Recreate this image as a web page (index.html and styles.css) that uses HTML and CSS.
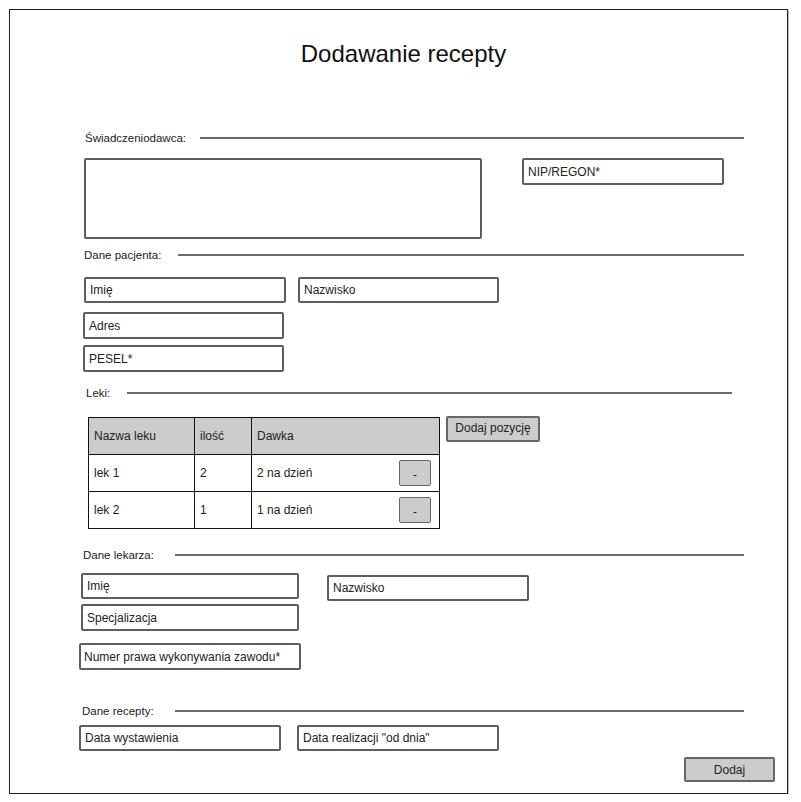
FILE: index.html
```html
<!DOCTYPE html>
<html lang="pl">
<head>
<meta charset="utf-8">
<title>Dodawanie recepty</title>
<link rel="stylesheet" href="styles.css">
</head>
<body>
<div class="frame">
  <h1 class="title">Dodawanie recepty</h1>

  <div class="section-head sh1"><span class="label">Świadczeniodawca:</span><i class="rule"></i></div>
  <div class="row r1">
    <div class="field textarea"></div>
    <div class="field nip">NIP/REGON*</div>
  </div>

  <div class="section-head sh2"><span class="label">Dane pacjenta:</span><i class="rule"></i></div>
  <div class="row r2">
    <div class="field p-imie">Imię</div>
    <div class="field p-nazwisko">Nazwisko</div>
  </div>
  <div class="field p-adres">Adres</div>
  <div class="field p-pesel">PESEL*</div>

  <div class="section-head sh3"><span class="label">Leki:</span><i class="rule"></i></div>
  <div class="row r3">
    <table class="meds">
      <thead>
        <tr><th class="c1">Nazwa leku</th><th class="c2">ilość</th><th class="c3">Dawka</th></tr>
      </thead>
      <tbody>
        <tr><td>lek 1</td><td>2</td><td><div class="dose"><span>2 na dzień</span><span class="minus">-</span></div></td></tr>
        <tr><td>lek 2</td><td>1</td><td><div class="dose"><span>1 na dzień</span><span class="minus">-</span></div></td></tr>
      </tbody>
    </table>
    <div class="btn add-pos">Dodaj pozycję</div>
  </div>

  <div class="section-head sh4"><span class="label">Dane lekarza:</span><i class="rule"></i></div>
  <div class="row r4">
    <div class="field l-imie">Imię</div>
    <div class="field l-nazwisko">Nazwisko</div>
  </div>
  <div class="field l-spec">Specjalizacja</div>
  <div class="field l-numer">Numer prawa wykonywania zawodu*</div>

  <div class="section-head sh5"><span class="label">Dane recepty:</span><i class="rule"></i></div>
  <div class="row r5">
    <div class="field d-wyst">Data wystawienia</div>
    <div class="field d-real">Data realizacji "od dnia"</div>
  </div>

  <div class="btn submit">Dodaj</div>
</div>
</body>
</html>
```

FILE: styles.css
```css
* { box-sizing: border-box; }

html, body {
  margin: 0;
  padding: 0;
  background: #ffffff;
}

body {
  font-family: "Liberation Sans", Arial, sans-serif;
  color: #222;
  font-size: 12px;
}

.frame {
  margin: 9px 0 0 9px;
  width: 779px;
  height: 785px;
  border: 1px solid #222;
  box-shadow: 1px 1px 0 #bbb;
  display: flex;
  flex-direction: column;
  align-items: flex-start;
}

.title {
  align-self: stretch;
  margin: 29px 0 0 0;
  padding-left: 10px;
  font-size: 24px;
  line-height: 30px;
  font-weight: normal;
  text-align: center;
  color: #111;
}

.section-head {
  align-self: stretch;
  display: flex;
  align-items: center;
  height: 16px;
  gap: 11px;
}
.section-head .label {
  font-size: 11.5px;
  line-height: 16px;
  white-space: nowrap;
  color: #222;
}
.section-head .rule {
  flex: 1;
  height: 0;
  border-top: 2px solid #6a6a6a;
}

.sh1 { margin: 61px 43px 0 75px; gap: 14px; }
.sh2 { margin: 8px 43px 0 74px; gap: 17px; }
.sh3 { margin: 13px 55px 0 76px; gap: 17px; }
.sh4 { margin: 18px 43px 0 73px; gap: 21px; }
.sh5 { margin: 33px 43px 0 72px; gap: 21px; }

.row {
  display: flex;
  align-items: flex-start;
}

.field {
  height: 26px;
  border: 2px solid #5e5e5e;
  border-radius: 2px;
  padding: 0 4px;
  display: flex;
  align-items: center;
  white-space: nowrap;
  font-size: 12px;
  color: #222;
  background: #fff;
}

.r1 { margin: 12px 0 0 74px; }
.textarea { width: 398px; height: 81px; }
.nip { width: 202px; height: 27px; margin-left: 40px; }

.r2 { margin: 14px 0 0 74px; }
.p-imie { width: 202px; }
.p-nazwisko { width: 201px; margin-left: 12px; }
.p-adres { width: 201px; height: 27px; margin: 9px 0 0 73px; }
.p-pesel { width: 201px; height: 27px; margin: 6px 0 0 73px; }

.r3 { margin: 15px 0 0 78px; }
.meds {
  margin-top: 1px;
  width: 352px;
  border-collapse: collapse;
  border: 1.5px solid #111;
  font-size: 12px;
}
.meds th, .meds td {
  border: 1px solid #111;
  text-align: left;
  font-weight: normal;
  padding: 0 0 0 5px;
  height: 37px;
  color: #222;
}
.meds thead th {
  background: #cccccc;
  border-bottom: 1.5px solid #111;
}
.meds .c1 { width: 106px; }
.meds .c2 { width: 57px; }
.meds td:last-child { padding-right: 8px; }

.dose {
  display: flex;
  align-items: center;
  justify-content: space-between;
}
.minus {
  width: 32px;
  height: 26px;
  background: #cccccc;
  border: 1.5px solid #666;
  border-radius: 2px;
  display: flex;
  align-items: center;
  justify-content: center;
  padding-top: 4px;
}

.btn {
  background: #cccccc;
  border: 2px solid #666;
  border-radius: 2px;
  display: flex;
  align-items: center;
  justify-content: center;
  font-size: 12px;
  color: #222;
  white-space: nowrap;
}
.add-pos {
  width: 94px;
  height: 26px;
  margin-left: 6px;
  padding-bottom: 3px;
}

.r4 { margin: 10px 0 0 71px; }
.l-imie { width: 218px; }
.l-nazwisko { width: 202px; margin: 2px 0 0 28px; }
.l-spec { width: 218px; height: 27px; margin: 3px 0 0 71px; }
.l-numer { width: 222px; height: 27px; margin: 12px 0 0 69px; padding-left: 3px; }

.r5 { margin: 6px 0 0 69px; }
.d-wyst { width: 202px; }
.d-real { width: 202px; margin-left: 16px; }

.submit {
  width: 91px;
  height: 25px;
  margin: 6px 0 0 674px;
}
```
